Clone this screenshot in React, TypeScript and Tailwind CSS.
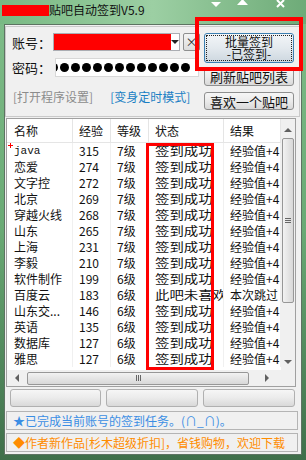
import React from "react";

const rows: string[][] = [
  ["java", "315", "7级", "签到成功", "经验值+4"],
  ["恋爱", "274", "7级", "签到成功", "经验值+4"],
  ["文字控", "272", "7级", "签到成功", "经验值+4"],
  ["北京", "269", "7级", "签到成功", "经验值+4"],
  ["穿越火线", "268", "7级", "签到成功", "经验值+4"],
  ["山东", "265", "7级", "签到成功", "经验值+4"],
  ["上海", "231", "7级", "签到成功", "经验值+4"],
  ["李毅", "210", "7级", "签到成功", "经验值+4"],
  ["软件制作", "199", "6级", "签到成功", "经验值+4"],
  ["百度云", "183", "6级", "此吧未喜欢", "本次跳过"],
  ["山东交...", "146", "6级", "签到成功", "经验值+4"],
  ["英语", "135", "6级", "签到成功", "经验值+4"],
  ["数据库", "127", "6级", "签到成功", "经验值+4"],
  ["雅思", "127", "6级", "签到成功", "经验值+4"],
];

const cols = ["w-[66px] pl-[7px]", "w-[38px] pl-[6px]", "w-[38px] pl-[6px]", "w-[75px] pl-[6px]", "w-[57px] pl-[6px]"];

function Tri({ dir, className }: { dir: "up" | "down" | "left" | "right"; className?: string }) {
  const pts = {
    up: "0,6 4,2 8,6",
    down: "0,2 8,2 4,6",
    left: "6,0 6,8 2,4",
    right: "2,0 2,8 6,4",
  }[dir];
  return (
    <svg width={8} height={8} viewBox="0 0 8 8" className={className}>
      <polygon points={pts} fill="currentColor" />
    </svg>
  );
}

function WinButton({ children, className = "" }: { children?: React.ReactNode; className?: string }) {
  return (
    <div
      className={`flex items-center justify-center rounded-[3px] border border-[#8e8f8f] bg-gradient-to-b from-[#f6f6f6] via-[#ebebeb] to-[#d9d9d9] text-[13px] text-[#111] ${className}`}
    >
      {children}
    </div>
  );
}

export default function App() {
  return (
    <div className="relative w-[306px] h-[460px] overflow-hidden flex flex-col bg-gradient-to-b from-[#7fbd89] via-[#6aaa75] to-[#3f6f4a] font-['Noto_Sans_CJK_SC','Liberation_Sans',sans-serif] leading-none">
      {/* title bar */}
      <div className="h-[24px] shrink-0 flex items-start bg-gradient-to-r from-[#78b983] via-[#9ccfa3] to-[#6eab78]">
        <div className="mt-[5px] ml-[2px] w-[47px] h-[11px] bg-[#ff0000]" />
        <span className="mt-[4px] text-[12px] text-[#111]">贴吧自动签到V5.9</span>
        <div className="ml-auto flex items-start text-white">
          <svg width={10} height={7} viewBox="0 0 10 7" className="mt-[1px]">
            <polygon points="0,1 10,1 5,6" fill="#fff" />
          </svg>
          <svg width={11} height={7} viewBox="0 0 11 7" className="ml-[16px] -mt-[1px]">
            <polygon points="0,6 11,6 5.5,0" fill="#fff" />
          </svg>
          <svg width={9} height={9} viewBox="0 0 9 9" className="ml-[28px] -mt-[1px] mr-[21px]">
            <path d="M1 1 L8 8 M8 1 L1 8" stroke="#fff" strokeWidth={2} />
          </svg>
        </div>
      </div>

      {/* client area */}
      <div className="ml-[4px] w-[298px] h-[431px] shrink-0 border border-[#5d7362] bg-[#f0f0f0] flex flex-col">
        {/* top panel */}
        <div className="mt-[1px] w-[295px] h-[91px] border border-[#c9c9c9] flex">
          <div className="w-[197px] flex flex-col pt-[6px] pl-[6px]">
            <div className="h-[18px] flex items-center">
              <span className="w-[41px] text-[13px] text-[#111]">账号：</span>
              <div className="w-[127px] h-[18px] border border-[#abadb3] bg-white flex items-center">
                <div className="w-[118px] h-[16px] bg-[#ff0000]" />
                <Tri dir="down" className="text-[#222]" />
              </div>
              <div className="ml-[3px] w-[17px] h-[18px] rounded-[2px] border border-[#8e8f8f] bg-gradient-to-b from-[#f4f4f4] to-[#dcdcdc] flex items-center justify-center text-[12px] text-[#333]">
                ×
              </div>
            </div>
            <div className="mt-[7px] h-[19px] flex items-center">
              <span className="w-[43px] text-[13px] text-[#111]">密码：</span>
              <div className="w-[144px] h-[19px] border border-[#d8d8d8] bg-white flex items-center overflow-hidden">
                <div className="flex gap-[2px] -ml-[7px]">
                  {Array.from({ length: 13 }).map((_, i) => (
                    <div key={i} className="w-[9px] h-[9px] shrink-0 rounded-full bg-black" />
                  ))}
                </div>
              </div>
            </div>
            <div className="mt-[13px] h-[14px] flex items-center text-[12px]">
              <span className="ml-[1px] text-[#8c8c8c]">[打开程序设置]</span>
              <span className="ml-[17px] text-[#1a7fc4]">[变身定时模式]</span>
            </div>
          </div>
          <div className="ml-[1px] w-[90px] flex flex-col pt-[6px]">
            <div className="h-[30px] rounded-[3px] border border-[#3c7fb1] bg-gradient-to-b from-[#f3f6f8] via-[#e3e9ee] to-[#cdd7df] p-px">
              <div className="h-full border border-dotted border-[#222] flex flex-col items-center justify-center text-[12px] text-[#111] leading-[12px]">
                <span>批量签到</span>
                <span>-已签到-</span>
              </div>
            </div>
            <WinButton className="mt-[4px] h-[19px]">刷新贴吧列表</WinButton>
            <WinButton className="mt-[6px] h-[18px]">喜欢一个贴吧</WinButton>
          </div>
        </div>

        {/* list view */}
        <div className="relative mt-[1px] ml-[1px] w-[290px] h-[269px] border border-[#a0a0a0] bg-white flex flex-col">
          <div className="h-[251px] flex">
            <div className="w-[274px] flex flex-col">
              <div className="h-[24px] flex border-b border-[#e5e5e5] text-[12px] text-[#111]">
                {["名称", "经验", "等级", "状态", "结果"].map((h, i) => (
                  <div key={h} className={`${cols[i]} flex items-center border-r border-[#e5e5e5]`}>
                    {h}
                  </div>
                ))}
              </div>
              <div className="h-[227px] overflow-hidden relative">
                <svg width={5} height={5} viewBox="0 0 5 5" className="absolute left-[1px] top-[0px]">
                  <path d="M2.5 0 V5 M0 2.5 H5" stroke="#ff0000" strokeWidth={1} />
                </svg>
                {rows.map((r) => (
                  <div key={r[0] + r[1]} className="h-[16px] flex text-[12px] text-[#111]">
                    {r.map((c, i) => (
                      <div
                        key={i}
                        className={`${cols[i]} flex items-center whitespace-nowrap overflow-hidden border-r border-[#f0f0f0] ${
                          i === 0 && c === "java" ? "font-['Liberation_Mono',monospace] text-[11px]" : ""
                        }`}
                      >
                        {i === 3 ? <span className="inline-block origin-left scale-x-[1.2]">{c}</span> : c}
                      </div>
                    ))}
                  </div>
                ))}
              </div>
            </div>
            {/* vertical scrollbar */}
            <div className="w-[14px] bg-[#f0f0f0] flex flex-col items-center">
              <Tri dir="up" className="mt-[7px] text-[#606060]" />
              <div className="mt-[4px] w-[12px] h-[165px] rounded-[2px] border border-[#979797] bg-gradient-to-r from-[#f2f2f2] to-[#d8d8d8] flex items-center justify-center">
                <div className="flex flex-col gap-[1px]">
                  <div className="w-[6px] h-px bg-[#666]" />
                  <div className="w-[6px] h-px bg-[#666]" />
                  <div className="w-[6px] h-px bg-[#666]" />
                </div>
              </div>
              <div className="flex-1" />
              <Tri dir="down" className="mb-[4px] text-[#606060]" />
            </div>
          </div>
          {/* horizontal scrollbar */}
          <div className="h-[16px] flex">
            <div className="w-[274px] bg-[#f0f0f0] flex items-center">
              <Tri dir="left" className="ml-[6px] text-[#606060]" />
              <div className="ml-[6px] w-[222px] h-[13px] rounded-[2px] border border-[#979797] bg-gradient-to-b from-[#f2f2f2] to-[#d8d8d8] flex items-center justify-center">
                <div className="flex gap-[1px]">
                  <div className="w-px h-[6px] bg-[#666]" />
                  <div className="w-px h-[6px] bg-[#666]" />
                  <div className="w-px h-[6px] bg-[#666]" />
                </div>
              </div>
              <Tri dir="right" className="ml-[14px] text-[#606060]" />
            </div>
            <div className="w-[14px] bg-[#f0f0f0]" />
          </div>
          {/* highlight on status column */}
          <div className="absolute left-[139px] top-[24px] w-[68px] h-[227px] border-[3px] border-[#ff0000]" />
        </div>

        {/* empty buttons */}
        <div className="mt-[2px] h-[18px] flex pl-[5px] gap-[5px]">
          <WinButton className="w-[91px] h-[18px] border-[#b0b0b0]" />
          <WinButton className="w-[92px] h-[18px] border-[#b0b0b0]" />
          <WinButton className="w-[92px] h-[18px] border-[#b0b0b0]" />
        </div>

        {/* status lines */}
        <div className="mt-[4px] ml-[1px] w-[292px] h-[19px] border border-[#b4b4b4] flex items-center pl-[6px] text-[12px] text-[#3b8ee4] whitespace-nowrap">
          ★已完成当前账号的签到任务。(∩_∩)。
        </div>
        <div className="mt-[3px] ml-[1px] w-[292px] h-[19px] border border-[#b4b4b4] flex items-center pl-[6px] text-[12px] text-[#ff8c00] whitespace-nowrap">
          ◆作者新作品[杉木超级折扣]，省钱购物，欢迎下载
        </div>
      </div>

      {/* highlight on the sign-in button */}
      <div className="absolute left-[195px] top-[17px] w-[108px] h-[54px] border-[4px] border-[#ff0000]" />
    </div>
  );
}
